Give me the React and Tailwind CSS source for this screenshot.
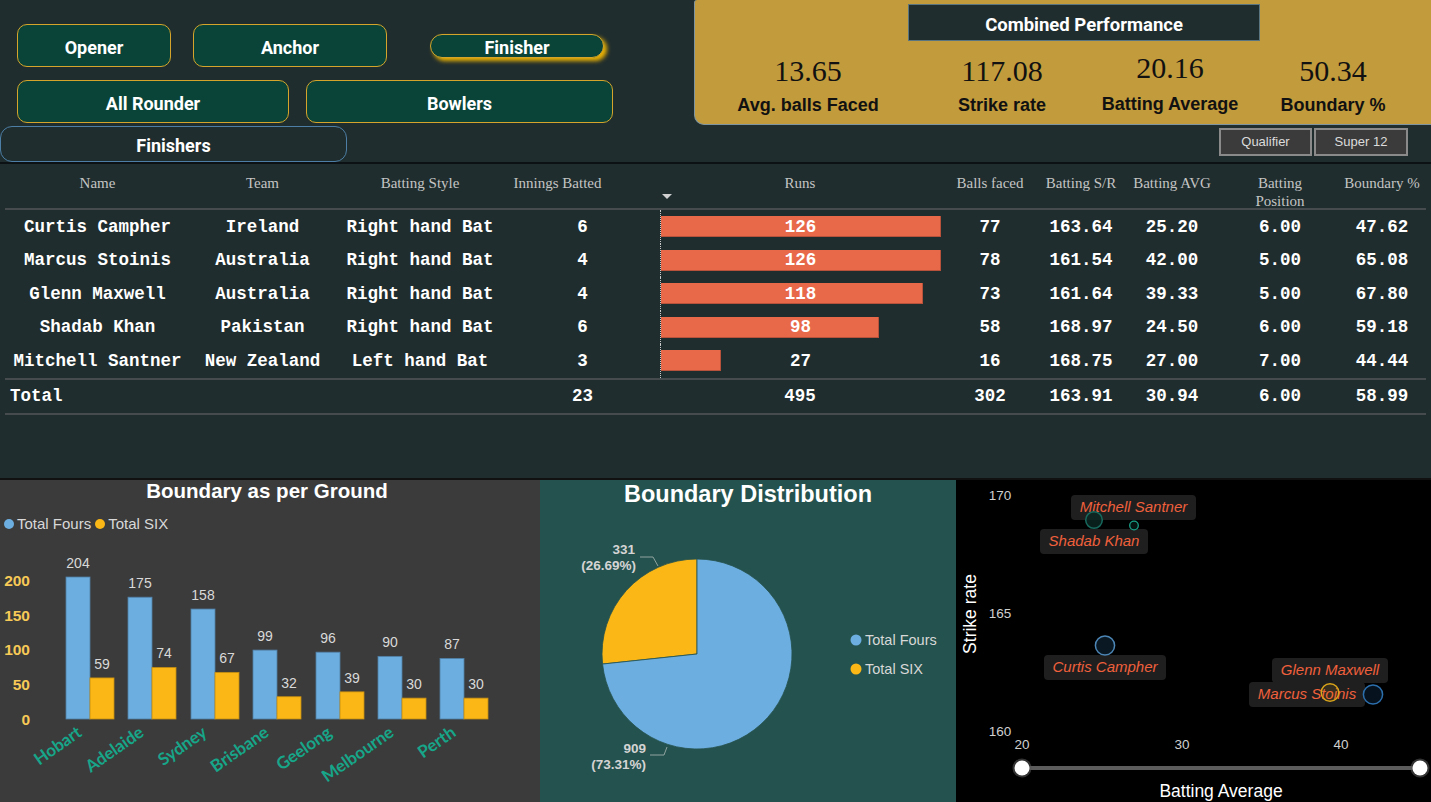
import React from "react";

const rows = [
  { name: "Curtis Campher", team: "Ireland", style: "Right hand Bat", inn: "6", runs: 126, balls: "77", sr: "163.64", avg: "25.20", pos: "6.00", bp: "47.62" },
  { name: "Marcus Stoinis", team: "Australia", style: "Right hand Bat", inn: "4", runs: 126, balls: "78", sr: "161.54", avg: "42.00", pos: "5.00", bp: "65.08" },
  { name: "Glenn Maxwell", team: "Australia", style: "Right hand Bat", inn: "4", runs: 118, balls: "73", sr: "161.64", avg: "39.33", pos: "5.00", bp: "67.80" },
  { name: "Shadab Khan", team: "Pakistan", style: "Right hand Bat", inn: "6", runs: 98, balls: "58", sr: "168.97", avg: "24.50", pos: "6.00", bp: "59.18" },
  { name: "Mitchell Santner", team: "New Zealand", style: "Left hand Bat", inn: "3", runs: 27, balls: "16", sr: "168.75", avg: "27.00", pos: "7.00", bp: "44.44" },
];

const cols = "grid grid-cols-[185px_145px_170px_155px_280px_100px_82px_100px_116px_88px]";
const mono = { fontFamily: "'Liberation Mono', 'DejaVu Sans Mono', monospace" };
const serif = { fontFamily: "'Liberation Serif', 'DejaVu Serif', serif" };
const roboto = { fontFamily: "Roboto, 'Liberation Sans', sans-serif" };
const arial = { fontFamily: "'Liberation Sans', Arial, sans-serif" };

function Btn({ className, children }) {
  return (
    <div
      className={
        "flex items-center justify-center bg-[#0a4439] border border-[#d4a52a] text-white font-bold text-[18px] " +
        className
      }
      style={roboto}
    >
      {children}
    </div>
  );
}

function Stat({ value, label, w, vshift }) {
  return (
    <div className={"flex flex-col items-center " + w}>
      <div className={"text-[30px] leading-[34px] text-[#111] " + (vshift || "")} style={serif}>
        {value}
      </div>
      <div className="text-[18px] leading-[20px] font-bold text-[#111] mt-[7px] whitespace-nowrap" style={arial}>
        {label}
      </div>
    </div>
  );
}

function BarChart() {
  const fours = [204, 175, 158, 99, 96, 90, 87];
  const sixes = [59, 74, 67, 32, 39, 30, 30];
  const xs = [66, 128, 191, 253, 316, 378, 440];
  const names = ["Hobart", "Adelaide", "Sydney", "Brisbane", "Geelong", "Melbourne", "Perth"];
  const base = 719;
  const k = 0.696;
  const ticks = [0, 50, 100, 150, 200];
  return (
    <svg width="540" height="268" className="block">
      <g transform="translate(0,-534)" style={arial}>
        {ticks.map((t) => (
          <text key={t} x="30" y={base - t * k + 6} textAnchor="end" fontSize="15.5" fontWeight="bold" fill="#f7c956">
            {t}
          </text>
        ))}
        {xs.map((x, i) => {
          const hf = fours[i] * k;
          const hs = sixes[i] * k;
          return (
            <g key={i}>
              <rect x={x} y={base - hf} width="24" height={hf} fill="#6daee0" stroke="#4f7fa6" strokeWidth="0.8" />
              <rect x={x + 24} y={base - hs} width="24" height={hs} fill="#fbb715" stroke="#c58d12" strokeWidth="0.8" />
              <text x={x + 12} y={base - hf - 9} textAnchor="middle" fontSize="14" fill="#d9d9d9">
                {fours[i]}
              </text>
              <text x={x + 36} y={base - hs - 9} textAnchor="middle" fontSize="14" fill="#d9d9d9">
                {sixes[i]}
              </text>
              <text
                x={x + 17}
                y={base + 16}
                textAnchor="end"
                fontSize="17"
                fontWeight="bold"
                fill="#17a689"
                transform={`rotate(-35 ${x + 17} ${base + 16})`}
                style={{ fontFamily: "'Comic Sans MS', Lato, sans-serif" }}
              >
                {names[i]}
              </text>
            </g>
          );
        })}
      </g>
    </svg>
  );
}

function PieChart() {
  const cx = 697;
  const cy = 654;
  const r = 95;
  const a = (96.08 * Math.PI) / 180;
  const px = cx - r * Math.sin(a);
  const py = cy - r * Math.cos(a);
  return (
    <svg width="416" height="294" className="block">
      <g transform="translate(-540,-508)" style={arial}>
        <path d={`M ${cx} ${cy} L ${cx} ${cy - r} A ${r} ${r} 0 0 0 ${px} ${py} Z`} fill="#fbb715" stroke="#24524e" strokeWidth="0.8" />
        <path d={`M ${cx} ${cy} L ${px} ${py} A ${r} ${r} 0 1 0 ${cx} ${cy - r} Z`} fill="#6daee0" stroke="#24524e" strokeWidth="0.8" />
        <polyline points="640,557 653,557 658,566" fill="none" stroke="#8fa3a0" strokeWidth="1" />
        <polyline points="650,755 664,755 667,747" fill="none" stroke="#8fa3a0" strokeWidth="1" />
        <text x="635" y="554" textAnchor="end" fontSize="13.5" fontWeight="bold" fill="#d4d4d4">331</text>
        <text x="636" y="570" textAnchor="end" fontSize="13.5" fontWeight="bold" fill="#d4d4d4">(26.69%)</text>
        <text x="646" y="753" textAnchor="end" fontSize="13.5" fontWeight="bold" fill="#d4d4d4">909</text>
        <text x="646" y="769" textAnchor="end" fontSize="13.5" fontWeight="bold" fill="#d4d4d4">(73.31%)</text>
        <circle cx="856" cy="640" r="5.5" fill="#6daee0" />
        <text x="865" y="645" fontSize="14.5" fill="#d8d8d8">Total Fours</text>
        <circle cx="856" cy="669" r="5.5" fill="#fbb715" />
        <text x="865" y="674" fontSize="14.5" fill="#d8d8d8">Total SIX</text>
      </g>
    </svg>
  );
}

function Scatter() {
  const labels = [
    { t: "Mitchell Santner", l: 115, top: 15, w: 125 },
    { t: "Shadab Khan", l: 84, top: 49, w: 108 },
    { t: "Curtis Campher", l: 88, top: 175, w: 122 },
    { t: "Glenn Maxwell", l: 316, top: 178, w: 116 },
    { t: "Marcus Stoinis", l: 293, top: 202, w: 116 },
  ];
  return (
    <div className="relative w-[475px] h-[322px] bg-black">
      <svg width="475" height="322" className="block">
        <g transform="translate(-956,-480)" style={arial}>
          <text x="1000" y="500" textAnchor="middle" fontSize="13.5" fill="#d0d0d0">170</text>
          <text x="1000" y="618" textAnchor="middle" fontSize="13.5" fill="#d0d0d0">165</text>
          <text x="1000" y="736" textAnchor="middle" fontSize="13.5" fill="#d0d0d0">160</text>
          <text x="1022" y="749" textAnchor="middle" fontSize="13.5" fill="#d0d0d0">20</text>
          <text x="1182" y="749" textAnchor="middle" fontSize="13.5" fill="#d0d0d0">30</text>
          <text x="1341" y="749" textAnchor="middle" fontSize="13.5" fill="#d0d0d0">40</text>
          <text x="976" y="614" textAnchor="middle" fontSize="17.5" fill="#ffffff" transform="rotate(-90 976 614)">Strike rate</text>
          <text x="1221" y="797" textAnchor="middle" fontSize="17.5" fill="#ffffff">Batting Average</text>
          <line x1="1022" y1="768" x2="1420" y2="768" stroke="#5c5c5c" strokeWidth="4" />
          <circle cx="1022" cy="768" r="9.5" fill="#555" opacity="0.6" />
          <circle cx="1022" cy="768" r="7.5" fill="#ffffff" />
          <circle cx="1420" cy="768" r="9.5" fill="#555" opacity="0.6" />
          <circle cx="1420" cy="768" r="7.5" fill="#ffffff" />
        </g>
      </svg>
      {labels.map((b) => (
        <div
          key={b.t}
          className="absolute h-[25px] rounded-[4px] bg-[#1f1f1f] flex items-center justify-center text-[15px] italic text-[#f0603c]"
          style={{ left: b.l, top: b.top, width: b.w, ...arial }}
        >
          {b.t}
        </div>
      ))}
      <svg width="475" height="322" className="absolute inset-0 pointer-events-none">
        <g transform="translate(-956,-480)">
          <circle cx="1094" cy="520" r="8.3" fill="#0b2723" fillOpacity="0.8" stroke="#17695d" strokeWidth="1.5" />
          <circle cx="1134" cy="525.5" r="4.3" fill="#041512" stroke="#18a087" strokeWidth="1.3" />
          <circle cx="1105" cy="645.5" r="9.6" fill="#0a1823" stroke="#4c86b6" strokeWidth="1.5" />
          <circle cx="1330" cy="692.5" r="8.8" fill="#d4a017" fillOpacity="0.12" stroke="#d9a41a" strokeWidth="1.5" />
          <circle cx="1373" cy="694.5" r="9.6" fill="#06121e" stroke="#2c6fad" strokeWidth="1.5" />
        </g>
      </svg>
    </div>
  );
}

export default function App() {
  return (
    <div className="w-[1431px] h-[802px] overflow-hidden bg-[#1f2d2e] flex flex-col">
      {/* Top section */}
      <div className="h-[162px] flex">
        <div className="w-[694px] flex flex-col">
          <div className="flex items-center pl-[17px] pt-[24px]">
            <Btn className="w-[154px] h-[43px] rounded-[10px] pt-[3px]">Opener</Btn>
            <Btn className="w-[194px] h-[43px] rounded-[10px] ml-[22px] pt-[3px]">Anchor</Btn>
            <Btn className="w-[174px] h-[24px] rounded-[12px] ml-[43px] pt-[3px] shadow-[3px_3px_4px_rgba(245,185,0,0.95)]">
              Finisher
            </Btn>
          </div>
          <div className="flex pl-[17px] mt-[13px]">
            <Btn className="w-[272px] h-[43px] rounded-[10px] pt-[3px]">All Rounder</Btn>
            <Btn className="w-[307px] h-[43px] rounded-[10px] ml-[17px] pt-[3px]">Bowlers</Btn>
          </div>
          <div
            className="mt-[3px] w-[347px] h-[36px] rounded-[12px] border border-[#4d7fa6] flex items-center justify-center pt-[3px] text-white font-bold text-[18px]"
            style={roboto}
          >
            Finishers
          </div>
        </div>
        <div className="w-[737px] flex flex-col">
          <div className="h-[125px] bg-[#c29b3c] rounded-bl-[10px] rounded-tl-[3px] border-l border-b border-[#7f96a0] flex flex-col">
            <div
              className="ml-[213px] mt-[4px] w-[352px] h-[37px] bg-[#1f2d2e] border border-[#5a7480] flex items-center justify-center pt-[7px] text-white font-bold text-[18.5px]"
              style={roboto}
            >
              Combined Performance
            </div>
            <div className="flex pl-[13px] mt-[13px]">
              <Stat value="13.65" label="Avg. balls Faced" w="w-[200px]" />
              <Stat value="117.08" label="Strike rate" w="w-[188px]" />
              <Stat value="20.16" label="Batting Average" w="w-[148px]" vshift="-mt-[3px] mb-[2px]" />
              <Stat value="50.34" label="Boundary %" w="w-[178px]" />
            </div>
          </div>
          <div className="flex justify-end pr-[23px] mt-[3px] gap-[2px]" style={arial}>
            <div className="w-[93px] h-[28px] bg-[#3b3b3b] border-2 border-[#8a8a8a] flex items-center justify-center text-[13px] text-[#dcdcdc]">
              Qualifier
            </div>
            <div className="w-[94px] h-[28px] bg-[#3b3b3b] border-2 border-[#8a8a8a] flex items-center justify-center text-[13px] text-[#dcdcdc]">
              Super 12
            </div>
          </div>
        </div>
      </div>
      <div className="h-[2px] bg-[#0c1213]" />

      {/* Table */}
      <div className="h-[314px] flex flex-col">
        <div className="mx-[5px] w-[1421px]">
          <div className={cols + " h-[44px] pt-[10px] text-[15px] leading-[18px] text-[#c4c4c4] text-center"} style={serif}>
            <div>Name</div>
            <div>Team</div>
            <div>Batting Style</div>
            <div className="pr-[50px] whitespace-nowrap">Innings Batted</div>
            <div className="relative">
              Runs
              <div className="absolute left-[2px] top-[20px] w-0 h-0 border-l-[5px] border-r-[5px] border-t-[5px] border-l-transparent border-r-transparent border-t-[#d0d0d0]" />
            </div>
            <div className="whitespace-nowrap">Balls faced</div>
            <div className="whitespace-nowrap">Batting S/R</div>
            <div className="whitespace-nowrap">Batting AVG</div>
            <div className="px-[30px]">Batting Position</div>
            <div className="whitespace-nowrap">Boundary %</div>
          </div>
          <div className="h-[2px] bg-[#464c4d]" />
          {rows.map((r) => (
            <div key={r.name} className={cols + " h-[33.5px] items-stretch text-white font-bold text-[17.5px] text-center"} style={mono}>
              <div className="flex items-center justify-center whitespace-nowrap">{r.name}</div>
              <div className="flex items-center justify-center whitespace-nowrap">{r.team}</div>
              <div className="flex items-center justify-center whitespace-nowrap">{r.style}</div>
              <div className="flex items-center justify-center">{r.inn}</div>
              <div className="relative flex items-center justify-center border-l border-dotted border-[#c8c8c8]">
                <div
                  className="absolute left-0 top-[6px] h-[21px] bg-[#e8694a] border-b border-r border-[#b8523a]"
                  style={{ width: (r.runs / 126) * 280 }}
                />
                <span className="relative">{r.runs}</span>
              </div>
              <div className="flex items-center justify-center">{r.balls}</div>
              <div className="flex items-center justify-center">{r.sr}</div>
              <div className="flex items-center justify-center">{r.avg}</div>
              <div className="flex items-center justify-center">{r.pos}</div>
              <div className="flex items-center justify-center">{r.bp}</div>
            </div>
          ))}
          <div className="h-[2px] bg-[#464c4d]" />
          <div className={cols + " h-[33px] items-center text-white font-bold text-[17.5px] text-center"} style={mono}>
            <div className="text-left pl-[5px]">Total</div>
            <div />
            <div />
            <div>23</div>
            <div>495</div>
            <div>302</div>
            <div>163.91</div>
            <div>30.94</div>
            <div>6.00</div>
            <div>58.99</div>
          </div>
          <div className="h-[2px] bg-[#464c4d]" />
        </div>
      </div>
      <div className="h-[2px] bg-[#111]" />

      {/* Bottom */}
      <div className="h-[322px] flex">
        <div className="w-[540px] bg-[#3b3b3b] flex flex-col" style={arial}>
          <div className="h-[22px] leading-[22px] text-center text-white font-bold text-[20.5px] pr-[6px]">Boundary as per Ground</div>
          <div className="h-[20px] mt-[12px] flex items-center pl-[4px] text-[15px] text-[#d8d8d8]">
            <span className="w-[10px] h-[10px] rounded-full bg-[#6daee0] mr-[3px]" />
            <span>Total Fours</span>
            <span className="w-[10px] h-[10px] rounded-full bg-[#fbb715] ml-[4px] mr-[3px]" />
            <span>Total SIX</span>
          </div>
          <BarChart />
        </div>
        <div className="w-[416px] bg-[#24524e] flex flex-col" style={arial}>
          <div className="pt-[1px] h-[28px] leading-[26px] text-center text-white font-bold text-[23.5px]">Boundary Distribution</div>
          <PieChart />
        </div>
        <Scatter />
      </div>
    </div>
  );
}
